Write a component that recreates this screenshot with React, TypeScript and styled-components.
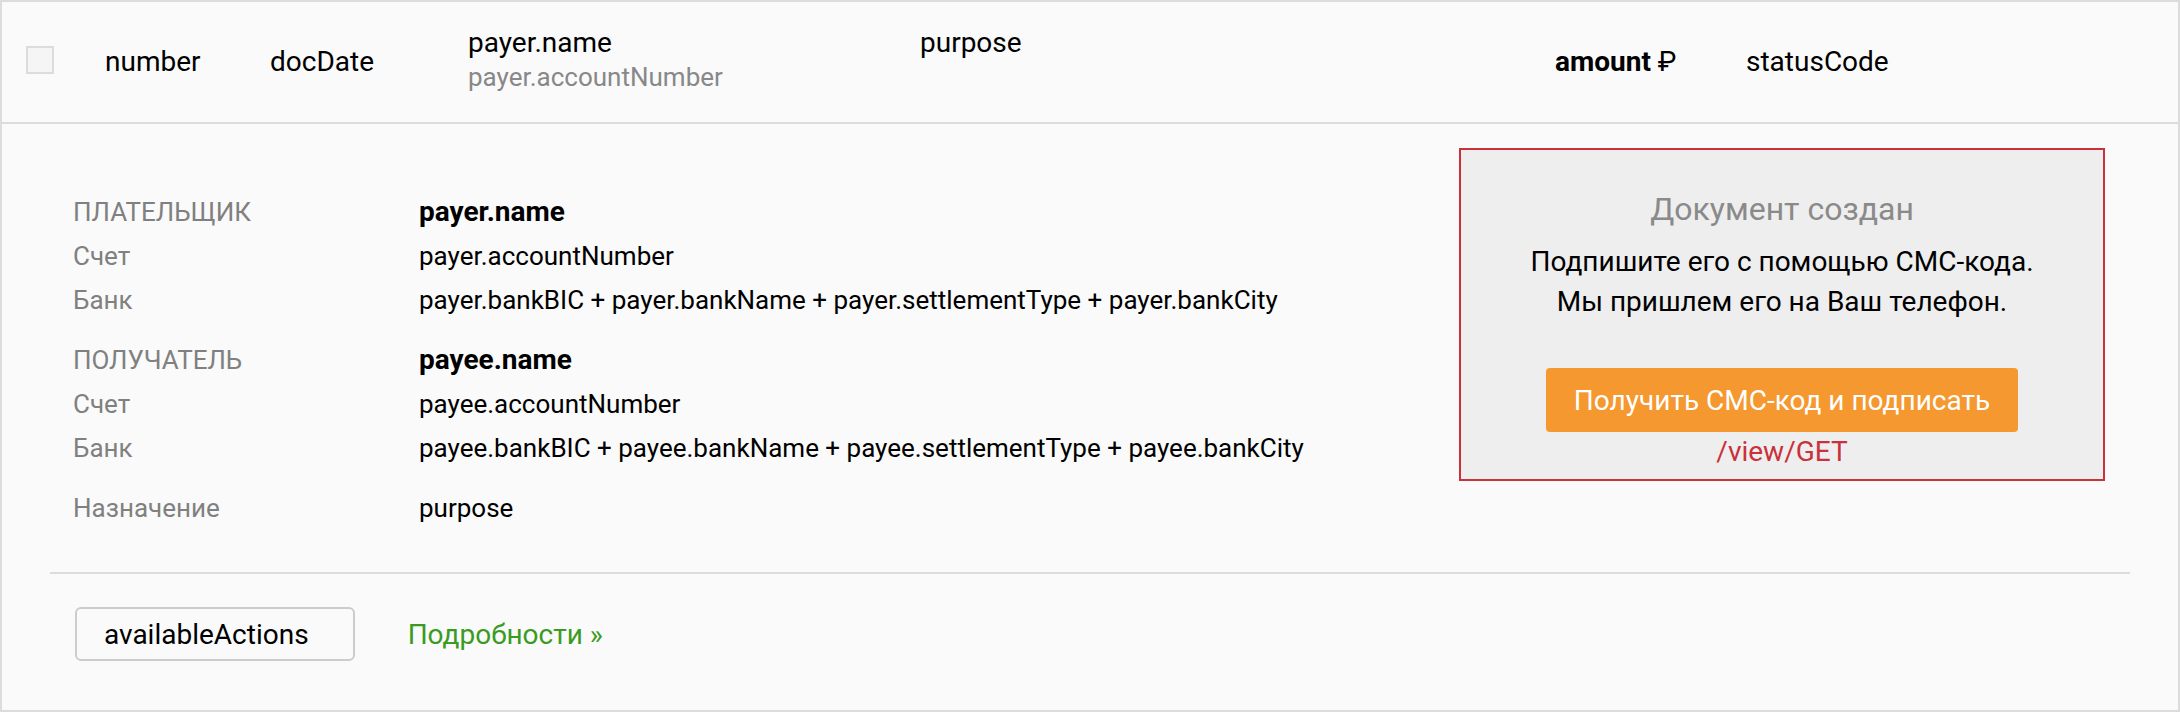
import React from 'react';
import styled, { createGlobalStyle } from 'styled-components';

const Global = createGlobalStyle`
  html, body { margin: 0; padding: 0; background: #ffffff; }
  body { font-family: Roboto, "Noto Sans", "Liberation Sans", sans-serif; }
  * { box-sizing: border-box; }
`;

const Card = styled.div`
  width: 2180px;
  height: 712px;
  border: 2px solid #dcdcdc;
  background: #fafafa;
  color: #000;
  display: flex;
  flex-direction: column;
`;

const HeaderRow = styled.div`
  height: 122px;
  flex: none;
  border-bottom: 2px solid #dcdcdc;
  display: flex;
  align-items: center;
  padding-left: 24px;
  font-size: 28px;
  line-height: 34px;
`;

const HeaderCell = styled.div<{ $width?: number; $top?: boolean }>`
  flex: ${(p) => (p.$width ? `0 0 ${p.$width}px` : '1 1 auto')};
  align-self: ${(p) => (p.$top ? 'flex-start' : 'center')};
  padding-top: ${(p) => (p.$top ? '24px' : '0')};
  display: flex;
  flex-direction: column;
`;

const Checkbox = styled.span`
  width: 28px;
  height: 28px;
  border: 2px solid #dcdcdc;
  background: #f5f5f5;
  margin-bottom: 4px;
`;

const SubText = styled.span`
  font-size: 26px;
  color: #888888;
`;

const Strong = styled.b`
  font-weight: 700;
`;

const Body = styled.div`
  flex: 1;
  display: flex;
  flex-direction: column;
  padding: 0 48px;
`;

const TopSection = styled.div`
  display: flex;
  justify-content: space-between;
  align-items: flex-start;
  padding: 24px 25px 0 23px;
`;

const Details = styled.div`
  margin-top: 42px;
  display: flex;
  flex-direction: column;
  gap: 16px;
`;

const Group = styled.div`
  display: grid;
  grid-template-columns: 346px auto;
  grid-auto-rows: 44px;
  align-items: baseline;
`;

const Label = styled.div`
  font-size: 26px;
  line-height: 44px;
  color: #808080;
`;

const Value = styled.div<{ $bold?: boolean }>`
  font-size: ${(p) => (p.$bold ? '28px' : '26px')};
  font-weight: ${(p) => (p.$bold ? 700 : 400)};
  line-height: 44px;
  color: #000;
`;

const StatusBox = styled.div`
  width: 646px;
  height: 333px;
  border: 2px solid #c9313b;
  background: #eeeeee;
  text-align: center;
  padding-top: 40px;
  display: flex;
  flex-direction: column;
  align-items: center;
`;

const StatusTitle = styled.div`
  font-size: 32px;
  line-height: 38px;
  color: #8a8a8a;
`;

const StatusText = styled.div`
  margin-top: 14px;
  font-size: 28px;
  line-height: 40px;
  color: #000;
`;

const SignButton = styled.button`
  margin-top: 46px;
  height: 64px;
  padding: 0 28px;
  border: none;
  border-radius: 4px;
  background: #f4982f;
  color: #ffffff;
  font-family: inherit;
  font-size: 28px;
  cursor: pointer;
`;

const PathNote = styled.div`
  margin-top: 3px;
  font-size: 28px;
  line-height: 34px;
  color: #c9313b;
`;

const Divider = styled.div`
  height: 2px;
  background: #dcdcdc;
  margin-top: 42px;
`;

const Footer = styled.div`
  display: flex;
  align-items: center;
  gap: 53px;
  padding: 33px 0 0 25px;
`;

const ActionsButton = styled.button`
  height: 54px;
  padding: 0 44px 0 27px;
  border: 2px solid #cccccc;
  border-radius: 6px;
  background: #fafafa;
  color: #000;
  font-family: inherit;
  font-size: 28px;
  cursor: pointer;
`;

const MoreLink = styled.a`
  font-size: 28px;
  color: #3a9b22;
  text-decoration: none;
`;

type Row = { label: string; value: string; bold?: boolean };

const groups: Row[][] = [
  [
    { label: 'ПЛАТЕЛЬЩИК', value: 'payer.name', bold: true },
    { label: 'Счет', value: 'payer.accountNumber' },
    { label: 'Банк', value: 'payer.bankBIC + payer.bankName + payer.settlementType + payer.bankCity' },
  ],
  [
    { label: 'ПОЛУЧАТЕЛЬ', value: 'payee.name', bold: true },
    { label: 'Счет', value: 'payee.accountNumber' },
    { label: 'Банк', value: 'payee.bankBIC + payee.bankName + payee.settlementType + payee.bankCity' },
  ],
  [{ label: 'Назначение', value: 'purpose' }],
];

export default function App() {
  return (
    <>
      <Global />
      <Card>
        <HeaderRow>
          <HeaderCell $width={79}>
            <Checkbox />
          </HeaderCell>
          <HeaderCell $width={165}>number</HeaderCell>
          <HeaderCell $width={198}>docDate</HeaderCell>
          <HeaderCell $width={452} $top>
            <span>payer.name</span>
            <SubText>payer.accountNumber</SubText>
          </HeaderCell>
          <HeaderCell $width={635} $top>
            purpose
          </HeaderCell>
          <HeaderCell $width={191}>
            <span>
              <Strong>amount</Strong> ₽
            </span>
          </HeaderCell>
          <HeaderCell>statusCode</HeaderCell>
        </HeaderRow>
        <Body>
          <TopSection>
            <Details>
              {groups.map((g, gi) => (
                <Group key={gi}>
                  {g.map((r, ri) => (
                    <React.Fragment key={ri}>
                      <Label>{r.label}</Label>
                      <Value $bold={r.bold}>{r.value}</Value>
                    </React.Fragment>
                  ))}
                </Group>
              ))}
            </Details>
            <StatusBox>
              <StatusTitle>Документ создан</StatusTitle>
              <StatusText>
                Подпишите его с помощью СМС-кода.
                <br />
                Мы пришлем его на Ваш телефон.
              </StatusText>
              <SignButton>Получить СМС-код и подписать</SignButton>
              <PathNote>/view/GET</PathNote>
            </StatusBox>
          </TopSection>
          <Divider />
          <Footer>
            <ActionsButton>availableActions</ActionsButton>
            <MoreLink href="#">Подробности »</MoreLink>
          </Footer>
        </Body>
      </Card>
    </>
  );
}
